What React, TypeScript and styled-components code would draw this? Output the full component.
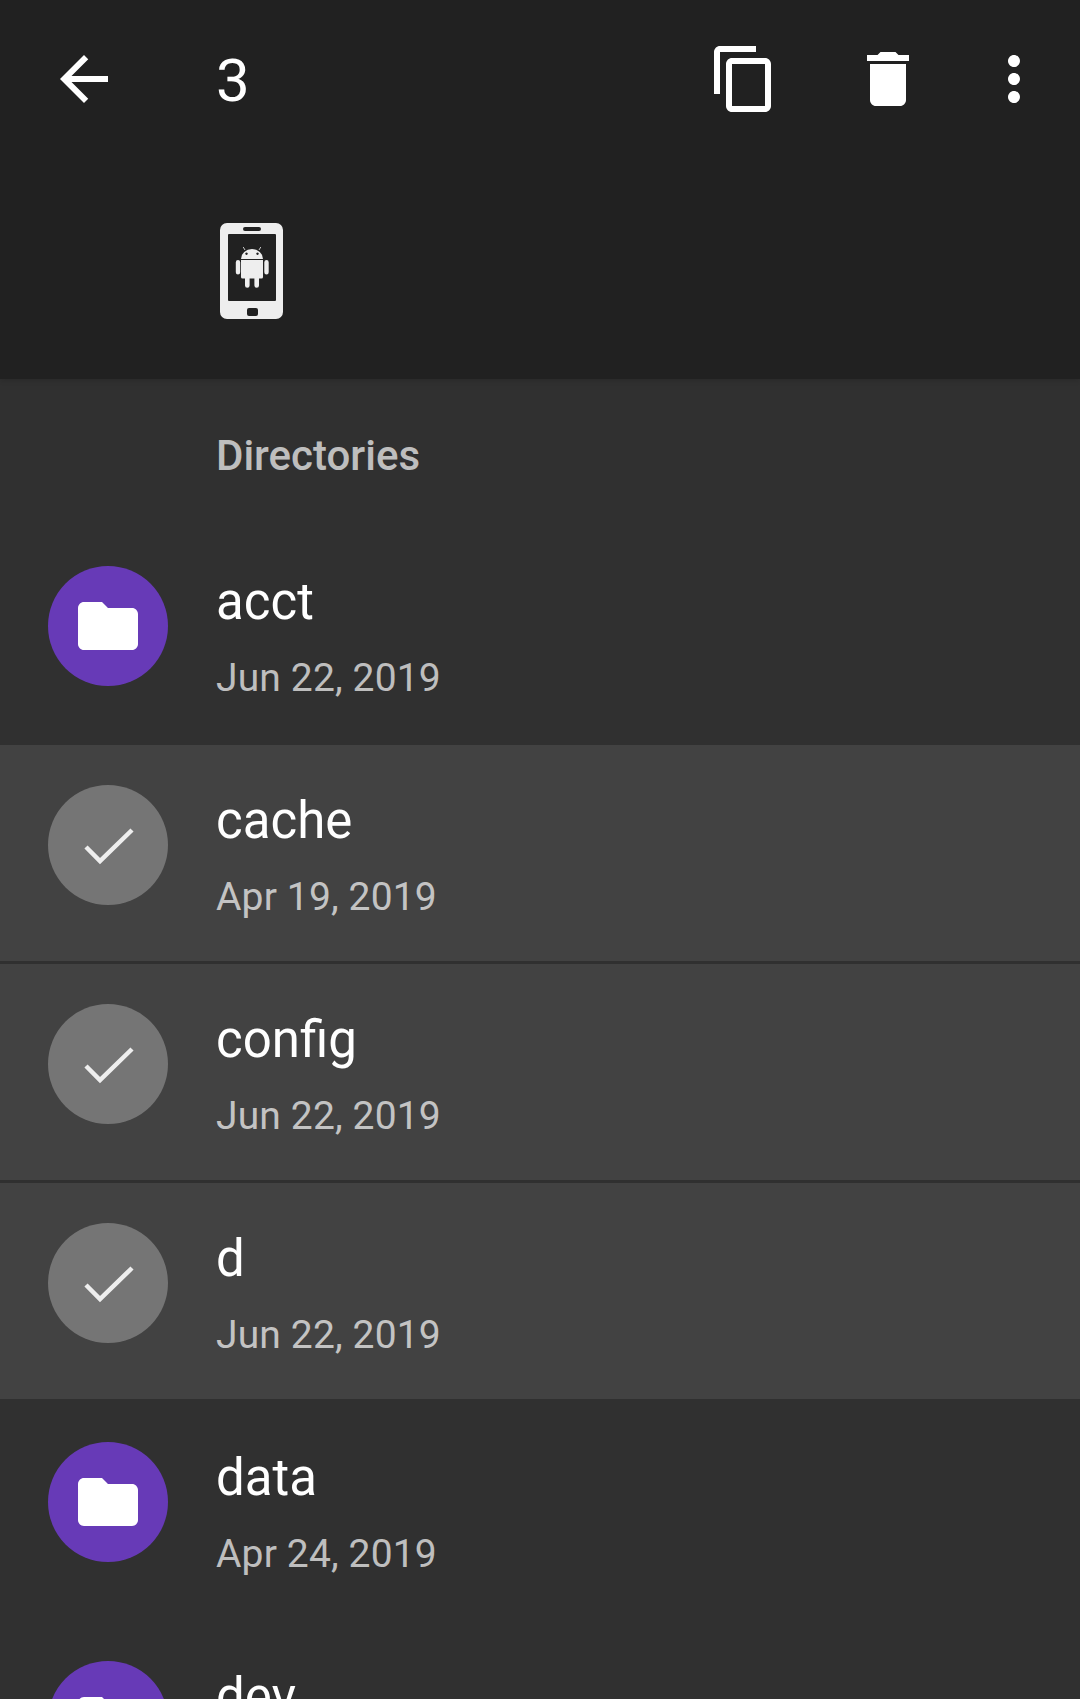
import React from "react";
import styled, { createGlobalStyle } from "styled-components";

const GlobalStyle = createGlobalStyle`
  html, body {
    margin: 0;
    padding: 0;
    background: #303030;
    font-family: Roboto, "Liberation Sans", sans-serif;
  }
`;

const entries = [
  { name: "acct", date: "Jun 22, 2019", selected: false, divided: false },
  { name: "cache", date: "Apr 19, 2019", selected: true, divided: true },
  { name: "config", date: "Jun 22, 2019", selected: true, divided: true },
  { name: "d", date: "Jun 22, 2019", selected: true, divided: false },
  { name: "data", date: "Apr 24, 2019", selected: false, divided: false },
  { name: "dev", date: "Jun 22, 2019", selected: false, divided: false },
];

const Icon = ({ d }: { d: string }) => (
  <IconSvg viewBox="0 0 24 24">
    <path d={d} fill="#fff" />
  </IconSvg>
);

const PhoneIcon = () => (
  <PhoneSvg viewBox="220 223 64 96">
    <path
      fillRule="evenodd"
      fill="#eeeeee"
      d="M227 223h49a7 7 0 0 1 7 7v82a7 7 0 0 1-7 7h-49a7 7 0 0 1-7-7v-82a7 7 0 0 1 7-7zM229 234a1 1 0 0 0-1 1v65a1 1 0 0 0 1 1h46a1 1 0 0 0 1-1v-65a1 1 0 0 0-1-1zM245 227a2 2 0 0 0 0 4h14a2 2 0 0 0 0-4zM249 308a2 2 0 0 0-2 2v4a2 2 0 0 0 2 2h7a2 2 0 0 0 2-2v-4a2 2 0 0 0-2-2z"
    />
    <path
      fill="#eeeeee"
      d="M241 260h22v17a1.500 1.500 0 0 1-1.500 1.500h-2.500v7a2.300 2.300 0 0 1-4.600 0v-7h-4.800v7a2.300 2.300 0 0 1-4.600 0v-7h-2.500a1.500 1.500 0 0 1-1.500-1.500zM238 260a2.200 2.200 0 0 1 2.200 2.200v10a2.200 2.200 0 0 1-4.400 0v-10a2.200 2.200 0 0 1 2.200-2.200zM266.500 260a2.200 2.200 0 0 1 2.200 2.200v10a2.200 2.200 0 0 1-4.400 0v-10a2.200 2.200 0 0 1 2.200-2.200z"
    />
    <path
      fillRule="evenodd"
      fill="#eeeeee"
      d="M241 259a11 10 0 0 1 22 0zM246.500 252.500a1.200 1.200 0 1 0 .01 0zM257.500 252.500a1.200 1.200 0 1 0 .01 0z"
    />
    <path stroke="#eeeeee" strokeWidth="0.8" d="M245 250l-1.800-3M259 250l1.800-3" />
  </PhoneSvg>
);

const EntryAvatar = ({ selected }: { selected: boolean }) => (
  <Avatar $selected={selected}>
    {selected ? (
      <IconSvg viewBox="0 0 72 72">
        <path d="M14 38L28 52L60 21" fill="none" stroke="#eeeeee" strokeWidth="4.500" />
      </IconSvg>
    ) : (
      <Icon d="M10 4H4c-1.100 0-1.990.9-1.990 2L2 18c0 1.100.9 2 2 2h16c1.100 0 2-.9 2-2V8c0-1.100-.9-2-2-2h-8l-2-2z" />
    )}
  </Avatar>
);

const App = () => {
  return (
    <Screen>
      <GlobalStyle />
      <AppBar>
        <Toolbar>
          <NavButton>
            <Icon d="M20 11H7.830l5.590-5.590L12 4l-8 8 8 8 1.410-1.410L7.830 13H20v-2z" />
          </NavButton>
          <Title>3</Title>
          <Action>
            <Icon d="M16 1H4c-1.100 0-2 .9-2 2v14h2V3h12V1zm3 4H8c-1.100 0-2 .9-2 2v14c0 1.100.9 2 2 2h11c1.100 0 2-.9 2-2V7c0-1.100-.9-2-2-2zm0 16H8V7h11v14z" />
          </Action>
          <Action>
            <Icon d="M6 19c0 1.100.9 2 2 2h8c1.100 0 2-.9 2-2V7H6v12zM19 4h-3.500l-1-1h-5l-1 1H5v2h14V4z" />
          </Action>
          <Overflow>
            <Icon d="M12 8c1.100 0 2-.9 2-2s-.9-2-2-2-2 .9-2 2 .9 2 2 2zm0 2c-1.100 0-2 .9-2 2s.9 2 2 2 2-.9 2-2-.9-2-2-2zm0 6c-1.100 0-2 .9-2 2s.9 2 2 2 2-.9 2-2-.9-2-2-2z" />
          </Overflow>
        </Toolbar>
        <Crumbs>
          <PhoneIcon />
        </Crumbs>
      </AppBar>
      <SectionHeader>Directories</SectionHeader>
      {entries.map((entry) => (
        <Row key={entry.name} $selected={entry.selected} $divided={entry.divided}>
          <EntryAvatar selected={entry.selected} />
          <RowText>
            <Name>{entry.name}</Name>
            <Meta>{entry.date}</Meta>
          </RowText>
        </Row>
      ))}
    </Screen>
  );
};

export default App;

const Screen = styled.div`
  width: 1080px;
  height: 1699px;
  overflow: hidden;
  background: #303030;
`;

const AppBar = styled.header`
  position: relative;
  height: 379px;
  background: #212121;
  box-shadow: 0 2px 5px rgba(0, 0, 0, 0.12);
`;

const Toolbar = styled.div`
  display: flex;
  align-items: center;
  height: 158px;
  padding-left: 48px;
  padding-right: 12px;
`;

const NavButton = styled.div`
  display: flex;
  width: 72px;
  height: 72px;
  margin-right: 96px;
`;

const Title = styled.div`
  flex: 1;
  padding-top: 4px;
  font-size: 60px;
  line-height: 72px;
  color: #fff;
`;

const Action = styled.div`
  display: flex;
  justify-content: center;
  width: 144px;
`;

const Overflow = styled(Action)`
  width: 108px;
`;

const IconSvg = styled.svg`
  display: block;
  width: 72px;
  height: 72px;
`;

const Crumbs = styled.div`
  padding-left: 220px;
  padding-top: 65px;
`;

const PhoneSvg = styled.svg`
  display: block;
  width: 64px;
  height: 96px;
  filter: blur(0.5px);
`;

const SectionHeader = styled.div`
  height: 147px;
  box-sizing: border-box;
  padding: 51px 0 0 216px;
  font-size: 42px;
  line-height: 52px;
  font-weight: 500;
  color: rgba(255, 255, 255, 0.7);
`;

const Row = styled.div<{ $selected: boolean; $divided: boolean }>`
  display: flex;
  height: 219px;
  box-sizing: border-box;
  padding: 40px 0 0 48px;
  background: ${(p) => (p.$selected ? "#424242" : "#303030")};
  border-bottom: 3px solid ${(p) => (p.$divided ? "#303030" : "transparent")};
  background-clip: padding-box;
`;

const Avatar = styled.div<{ $selected: boolean }>`
  display: flex;
  align-items: center;
  justify-content: center;
  flex: none;
  width: 120px;
  height: 120px;
  border-radius: 50%;
  background: ${(p) => (p.$selected ? "#757575" : "#673ab7")};
`;

const RowText = styled.div`
  margin-left: 48px;
  margin-top: 4px;
`;

const Name = styled.div`
  font-size: 51px;
  line-height: 64px;
  color: #fff;
`;

const Meta = styled.div`
  margin-top: 18px;
  font-size: 39px;
  line-height: 52px;
  letter-spacing: 0.15px;
  color: rgba(255, 255, 255, 0.7);
`;
